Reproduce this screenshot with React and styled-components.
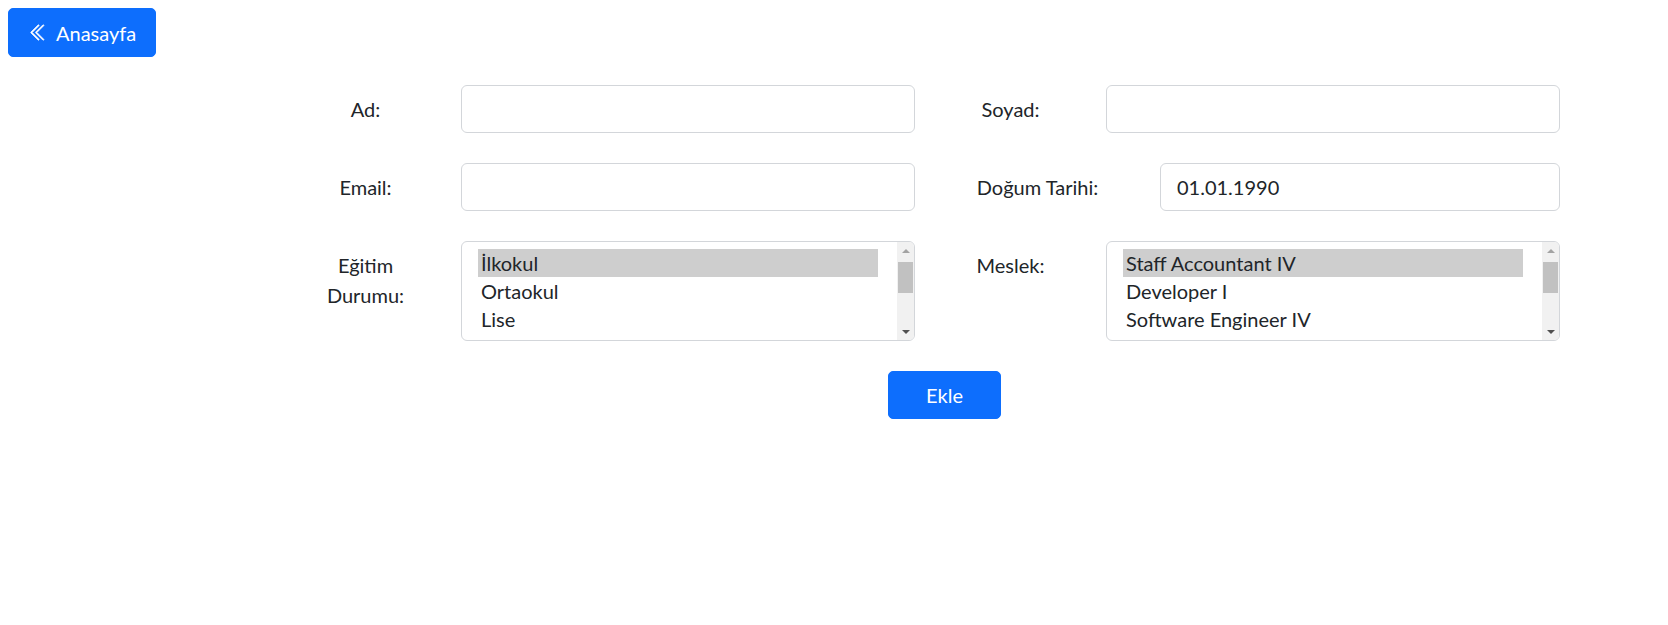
import styled, { createGlobalStyle } from "styled-components";
import { BsChevronDoubleLeft } from "react-icons/bs";

const GlobalStyle = createGlobalStyle`
  * { box-sizing: border-box; }
  body {
    margin: 8px;
    background: #fff;
    color: #212529;
    font-family: Lato, "Open Sans", sans-serif;
  }
`;

const TopBar = styled.div`
  display: flex;
`;

const HomeButton = styled.button`
  display: inline-flex;
  align-items: center;
  gap: 8px;
  height: 49px;
  padding: 0 19px 0 20px;
  font-family: inherit;
  font-size: 20px;
  color: #fff;
  background: #0d6efd;
  border: 1px solid #0d6efd;
  border-radius: 5px;
`;

const Form = styled.form`
  width: 1290px;
  margin: 28px 0 0 262px;
  display: grid;
  grid-template-columns: 645px 645px;
  row-gap: 30px;
`;

const Field = styled.div`
  display: flex;
  align-items: flex-start;
`;

const Label = styled.label`
  flex: 0 0 ${(p) => p.$w}px;
  padding: 9px 48px 0;
  text-align: center;
  font-size: 20px;
  line-height: 30px;
`;

const TextInput = styled.input`
  flex: 1;
  min-width: 0;
  height: 48px;
  padding: 8px 16px;
  font-family: inherit;
  font-size: 20px;
  line-height: 30px;
  color: #212529;
  border: 1px solid #d3d6da;
  border-radius: 6px;
  outline: none;
`;

const ListBox = styled.div`
  flex: 1;
  display: flex;
  height: 100px;
  border: 1px solid #d3d6da;
  border-radius: 6px;
  overflow: hidden;
`;

const Options = styled.div`
  flex: 1;
  padding: 7px 19px 0 16px;
  overflow: hidden;
`;

const Option = styled.div`
  height: 28px;
  padding: 0 3px;
  font-size: 20px;
  line-height: 28px;
  white-space: nowrap;
  background: ${(p) => (p.$selected ? "#cecece" : "transparent")};
`;

const ScrollBar = styled.div`
  flex: 0 0 17px;
  display: flex;
  flex-direction: column;
  align-items: center;
  background: #f1f1f1;
`;

const Arrow = styled.div`
  flex: 0 0 17px;
  width: 17px;
  display: flex;
  align-items: center;
  justify-content: center;
  &::before {
    content: "";
    border-left: 4px solid transparent;
    border-right: 4px solid transparent;
    ${(p) =>
      p.$down
        ? `border-top: 4px solid ${p.$color};`
        : `border-bottom: 4px solid ${p.$color};`}
  }
`;

const Thumb = styled.div`
  width: 15px;
  height: 31px;
  margin-top: 3px;
  background: #c1c1c1;
`;

const Spacer = styled.div`
  flex: 1;
`;

const Actions = styled.div`
  grid-column: 1 / -1;
  display: flex;
  padding-left: 618px;
`;

const SubmitButton = styled.button`
  width: 113px;
  height: 48px;
  font-family: inherit;
  font-size: 20px;
  color: #fff;
  background: #0d6efd;
  border: 1px solid #0d6efd;
  border-radius: 5px;
`;

function Select({ items }) {
  return (
    <ListBox>
      <Options>
        {items.map((it, i) => (
          <Option key={it} $selected={i === 0}>
            {it}
          </Option>
        ))}
      </Options>
      <ScrollBar>
        <Arrow $color="#a3a3a3" />
        <Thumb />
        <Spacer />
        <Arrow $down $color="#505050" />
      </ScrollBar>
    </ListBox>
  );
}

const egitim = ["İlkokul", "Ortaokul", "Lise", "Lisans", "Yüksek Lisans", "Doktora"];
const meslek = ["Staff Accountant IV", "Developer I", "Software Engineer IV", "Financial Analyst"];

export default function App() {
  return (
    <>
      <GlobalStyle />
      <TopBar>
        <HomeButton>
          <BsChevronDoubleLeft size={19} stroke="currentColor" strokeWidth={0.6} />
          Anasayfa
        </HomeButton>
      </TopBar>
      <Form onSubmit={(e) => e.preventDefault()}>
        <Field>
          <Label $w={191}>Ad:</Label>
          <TextInput />
        </Field>
        <Field>
          <Label $w={191}>Soyad:</Label>
          <TextInput />
        </Field>
        <Field>
          <Label $w={191}>Email:</Label>
          <TextInput />
        </Field>
        <Field>
          <Label $w={245}>Doğum Tarihi:</Label>
          <TextInput defaultValue="01.01.1990" />
        </Field>
        <Field>
          <Label $w={191}>Eğitim Durumu:</Label>
          <Select items={egitim} />
        </Field>
        <Field>
          <Label $w={191}>Meslek:</Label>
          <Select items={meslek} />
        </Field>
        <Actions>
          <SubmitButton type="submit">Ekle</SubmitButton>
        </Actions>
      </Form>
    </>
  );
}
